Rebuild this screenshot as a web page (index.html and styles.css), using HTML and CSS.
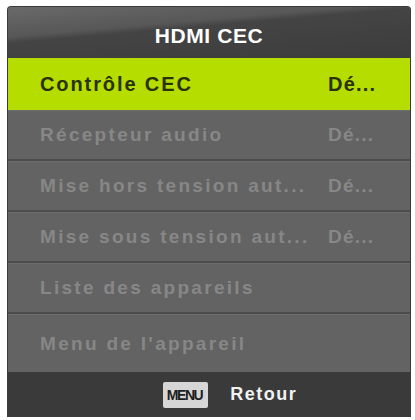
FILE: index.html
```html
<!DOCTYPE html>
<html>
<head>
<meta charset="utf-8">
<link rel="stylesheet" href="styles.css">
</head>
<body>
<div class="panel">
  <div class="header">HDMI CEC</div>
  <div class="row active"><span class="label">Contrôle CEC</span><span class="value">Dé...</span></div>
  <div class="row"><span class="label">Récepteur audio</span><span class="value">Dé...</span></div>
  <div class="row"><span class="label">Mise hors tension aut...</span><span class="value">Dé...</span></div>
  <div class="row"><span class="label">Mise sous tension aut...</span><span class="value">Dé...</span></div>
  <div class="row"><span class="label">Liste des appareils</span></div>
  <div class="row last"><span class="label">Menu de l'appareil</span></div>
  <div class="footer"><span class="key">MENU</span><span class="back">Retour</span></div>
</div>
</body>
</html>
```
FILE: styles.css
```css
html, body { margin: 0; padding: 0; background: #ffffff; }
body { font-family: "Liberation Sans", Arial, sans-serif; }
.panel {
  margin: 7px 0 0 8px;
  width: 402px;
  height: 410px;
  display: flex;
  flex-direction: column;
  background: #636363;
  box-shadow: 0 0 0 1px #3a3a3a;
  border-radius: 3px 3px 0 0;
  overflow: hidden;
}
.header {
  height: 51px;
  flex: none;
  display: flex;
  align-items: center;
  justify-content: center;
  padding-top: 6px;
  box-sizing: border-box;
  color: #ffffff;
  font-weight: bold;
  font-size: 21px;
  letter-spacing: 0.6px;
  background: linear-gradient(175deg, #6a6a6a 0%, #575757 35%, #444444 42%, #3c3c3c 100%);
}
.row {
  height: 51px;
  flex: none;
  display: flex;
  align-items: center;
  padding: 0 28px 0 32px;
  box-sizing: border-box;
  color: #878787;
  font-weight: bold;
  font-size: 19px;
  letter-spacing: 2.3px;
  border-top: 1px solid #6c6c6c;
  border-bottom: 2px solid #4c4c4c;
}
.row.active {
  height: 52px;
  background: #b6dd00;
  color: #2a320b;
  font-size: 20px;
  letter-spacing: 1.9px;
  border: none;
  padding-top: 1px;
}
.row.last { height: 58px; border-bottom: none; }
.label { flex: 1; white-space: nowrap; }
.value { width: 54px; white-space: nowrap; letter-spacing: 1.2px; }
.footer {
  flex: 1;
  display: flex;
  align-items: center;
  justify-content: center;
  gap: 22px;
  background: #3a3a3a;
  padding-left: 42px;
}
.key {
  background: #d6d6d6;
  color: #1e1e1e;
  font-size: 14px;
  font-weight: bold;
  letter-spacing: -1.4px;
  padding: 5px 6px 5px 4px;
  border-radius: 2px;
}
.back {
  color: #f2f2f2;
  font-weight: bold;
  font-size: 18px;
  letter-spacing: 1.5px;
}
```
